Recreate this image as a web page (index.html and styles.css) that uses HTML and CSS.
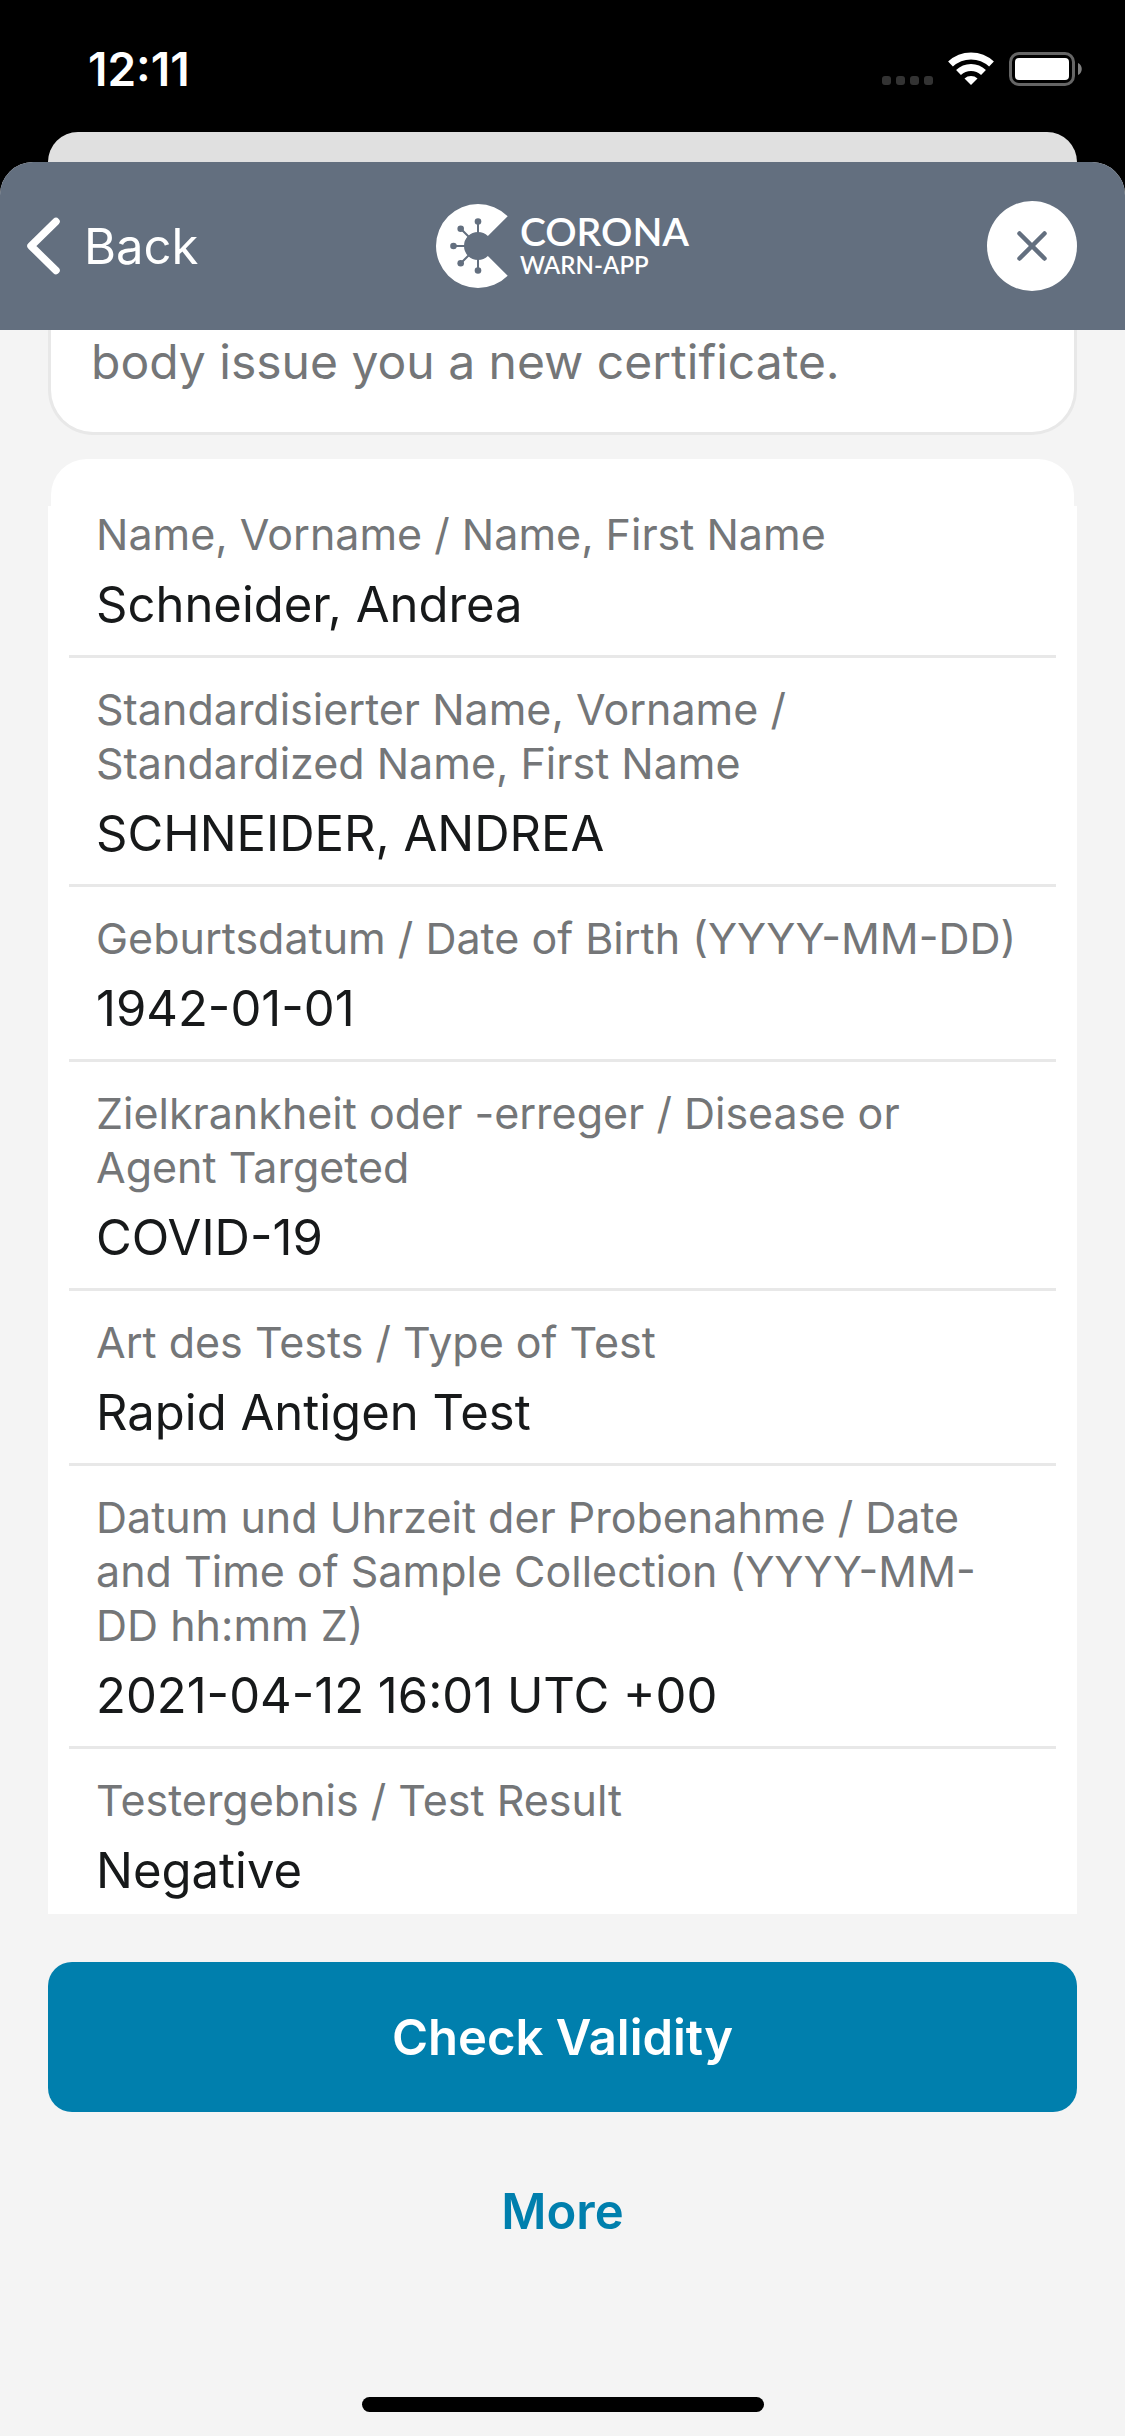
FILE: index.html
```html
<!DOCTYPE html>
<html lang="en">
<head>
  <meta charset="utf-8">
  <meta name="viewport" content="width=device-width, initial-scale=1">
  <title>Corona-Warn-App – Test Certificate</title>
  <link rel="stylesheet" href="styles.css">
</head>
<body>
  <div class="status-bar">
    <span class="status-time">12:11</span>
    <svg class="status-icons" width="201" height="36" viewBox="0 0 201 36" role="img" aria-label="Wi-Fi connected, battery full">
      <g fill="#333">
        <rect x="0" y="25" width="9" height="9" rx="3"/>
        <rect x="14" y="25" width="9" height="9" rx="3"/>
        <rect x="28" y="25" width="9" height="9" rx="3"/>
        <rect x="42" y="25" width="9" height="9" rx="3"/>
      </g>
      <g fill="none" stroke="#fff" stroke-width="7">
        <path d="M68.500 13 A30 30 0 0 1 109.500 13"/>
        <path d="M76.500 21.500 A18 18 0 0 1 101.500 21.500"/>
      </g>
      <path d="M82.500 27.500 A10 10 0 0 1 95.500 27.500 L89 34 Z" fill="#fff"/>
      <rect x="128.500" y="2.500" width="63" height="31" rx="8.500" fill="none" stroke="#666" stroke-width="3"/>
      <rect x="133" y="7" width="54" height="22" rx="4" fill="#fff"/>
      <path d="M196 12 C201 14 201 22 196 24 Z" fill="#808080"/>
    </svg>
  </div>
  <div class="under-sheet"></div>

  <div class="sheet">
    <header class="nav-bar">
      <button class="back-button" type="button">
        <svg width="36" height="58" viewBox="0 0 36 58" aria-hidden="true">
          <path d="M30 4.500 L5 29 L30 53.500" fill="none" stroke="#fff" stroke-width="7.500" stroke-linecap="round" stroke-linejoin="round"/>
        </svg>
        <span>Back</span>
      </button>
      <div class="logo">
        <svg width="84" height="84" viewBox="0 0 84 84" aria-hidden="true">
          <path d="M71.700 12.300 A42 42 0 1 0 71.700 71.700 L51.900 51.900 A14 14 0 1 1 51.900 32.100 Z" fill="#fff"/>
          <g stroke="#636f7f" stroke-width="2">
            <path d="M42 30 V18 M42 54 V66 M30 42 H18 M34 34 L25 25 M34 50 L25 59"/>
          </g>
          <g fill="#636f7f">
            <circle cx="42" cy="17.500" r="3.300"/>
            <circle cx="42" cy="66.500" r="3.300"/>
            <circle cx="17.500" cy="42" r="3.300"/>
            <circle cx="24.700" cy="24.700" r="3.300"/>
            <circle cx="24.700" cy="59.300" r="3.300"/>
          </g>
        </svg>
        <div class="logo-text">
          <span class="logo-name">CORONA</span>
          <span class="logo-sub">WARN-APP</span>
        </div>
      </div>
      <button class="close-button" type="button" aria-label="Close">
        <svg width="32" height="32" viewBox="0 0 32 32" aria-hidden="true">
          <path d="M3.500 3.500 L28.500 28.500 M28.500 3.500 L3.500 28.500" fill="none" stroke="#636f7f" stroke-width="4.500" stroke-linecap="round"/>
        </svg>
      </button>
    </header>

    <main class="content">
      <p class="notice">body issue you a new certificate.</p>
      <div class="card-cap"></div>
      <dl class="details">
        <div class="detail">
          <dt>Name, Vorname / Name, First Name</dt>
          <dd>Schneider, Andrea</dd>
        </div>
        <div class="detail">
          <dt>Standardisierter Name, Vorname / Standardized Name, First Name</dt>
          <dd>SCHNEIDER, ANDREA</dd>
        </div>
        <div class="detail">
          <dt>Geburtsdatum / Date of Birth (YYYY-MM-DD)</dt>
          <dd>1942-01-01</dd>
        </div>
        <div class="detail">
          <dt>Zielkrankheit oder -erreger / Disease or Agent Targeted</dt>
          <dd>COVID-19</dd>
        </div>
        <div class="detail">
          <dt>Art des Tests / Type of Test</dt>
          <dd>Rapid Antigen Test</dd>
        </div>
        <div class="detail">
          <dt>Datum und Uhrzeit der Probenahme / Date and Time of Sample Collection (YYYY-MM-DD hh:mm Z)</dt>
          <dd>2021-04-12 16:01 UTC +00</dd>
        </div>
        <div class="detail">
          <dt>Testergebnis / Test Result</dt>
          <dd>Negative</dd>
        </div>
      </dl>
    </main>

    <footer class="actions">
      <button class="action primary" type="button">Check Validity</button>
      <button class="action secondary" type="button">More</button>
      <div class="home-indicator"></div>
    </footer>
  </div>
</body>
</html>
```

FILE: styles.css
```css
* {
  box-sizing: border-box;
}

body {
  margin: 0;
  height: 100vh;
  display: flex;
  flex-direction: column;
  background: #000;
  color: #17191a;
  font-family: Inter, "Liberation Sans", sans-serif;
  font-size: 49px;
  line-height: 61px;
  overflow: hidden;
}

button {
  border: 0;
  padding: 0;
  background: none;
  font: inherit;
  cursor: pointer;
}

svg {
  display: block;
  flex: none;
}

/* Status bar */
.status-bar {
  flex: none;
  height: 132px;
  padding: 42px 42px 0 88px;
  display: flex;
  justify-content: space-between;
  align-items: flex-start;
  color: #fff;
}

.status-time {
  font-size: 46px;
  line-height: 54px;
  font-weight: 600;
}

.status-icons {
  margin-top: 9px;
}

/* Sheet that lies behind the open one */
.under-sheet {
  flex: none;
  height: 30px;
  margin: 0 48px;
  border-radius: 30px 30px 0 0;
  background: #e0e0e0;
}

.sheet {
  flex: 1;
  min-height: 0;
  display: flex;
  flex-direction: column;
  border-radius: 33px 33px 0 0;
  background: #f4f4f4;
  overflow: hidden;
}

/* Navigation bar */
.nav-bar {
  flex: none;
  height: 168px;
  padding: 0 48px;
  display: grid;
  grid-template-columns: 1fr auto 1fr;
  align-items: center;
  background: #636f7f;
  color: #fff;
}

.back-button {
  justify-self: start;
  margin-left: -22px;
  display: flex;
  align-items: center;
  gap: 22px;
  color: inherit;
}

.logo {
  display: flex;
  align-items: center;
}

.logo-text {
  display: flex;
  flex-direction: column;
  font-family: Lato, sans-serif;
  font-weight: 600;
}

.logo-name {
  font-size: 39px;
  line-height: 38px;
}

.logo-sub {
  font-size: 24px;
  line-height: 30px;
}

.close-button {
  justify-self: end;
  width: 90px;
  height: 90px;
  border-radius: 50%;
  display: grid;
  place-items: center;
  background: #fff;
}

.content {
  flex: 1;
  min-height: 0;
  padding: 0 48px;
  overflow: hidden;
}

.notice {
  margin: 0;
  padding: 1px 40px 40px;
  border: 3px solid #e8e8e8;
  border-top: 0;
  border-radius: 0 0 45px 45px;
  background: #fff;
  color: #747678;
  font-size: 48px;
}

.card-cap {
  height: 47px;
  margin: 24px 3px 0;
  border-radius: 36px 36px 0 0;
  background: #fff;
}

.details {
  margin: 0;
  padding: 0 21px;
  display: flex;
  flex-direction: column;
  background: #fff;
}

.detail {
  padding: 24px 27px 20px;
  border-bottom: 3px solid #e8e8e8;
}

.detail:first-child {
  margin-top: -23px;
}

.detail dt {
  margin-bottom: 13px;
  color: #747678;
  font-size: 43px;
  line-height: 54px;
}

.detail dd {
  margin: 0;
}

/* Bottom actions */
.actions {
  flex: none;
  padding: 48px 48px 24px;
  display: flex;
  flex-direction: column;
}

.action {
  height: 150px;
  border-radius: 24px;
  font-weight: 600;
}

.primary {
  background: #007fad;
  color: #fff;
}

.secondary {
  margin-top: 24px;
  color: #007fad;
}

.home-indicator {
  align-self: center;
  width: 402px;
  height: 15px;
  margin-top: 111px;
  border-radius: 8px;
  background: #000;
}
```
